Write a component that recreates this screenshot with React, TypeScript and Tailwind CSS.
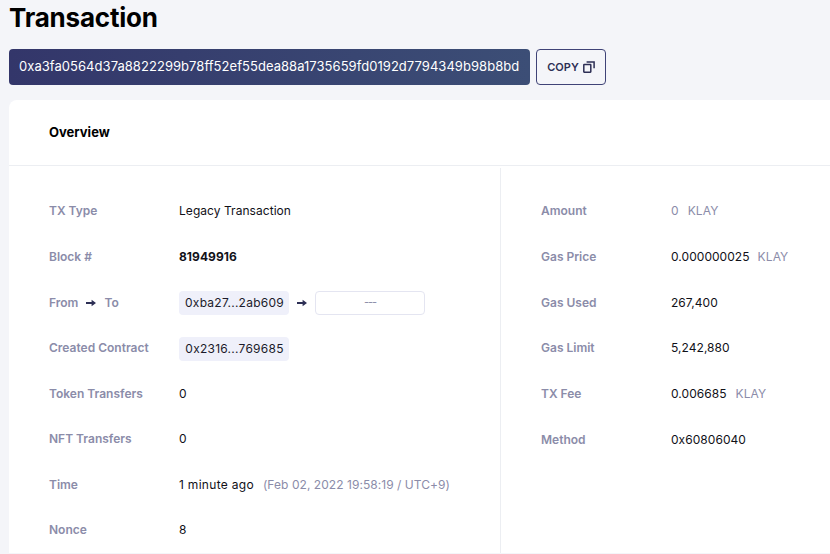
import React from 'react';

const Arrow = () => (
  <svg width="10" height="8" viewBox="0 0 10 8" className="shrink-0 text-[#2d2f55]" fill="currentColor">
    <path d="M0 3.1h5.6V0.8L10 4 5.6 7.2V4.9H0z" />
  </svg>
);

const CopyIcon = () => (
  <svg width="12" height="12" viewBox="0 0 12 12" fill="none" stroke="#2d2f55" strokeWidth="1.5" className="shrink-0">
    <rect x="0.8" y="3.6" width="7" height="7.6" rx="0.4" />
    <path d="M3.6 0.9h7.5v6.4" />
  </svg>
);

const Chip = ({ children }: { children: React.ReactNode }) => (
  <span className="flex h-6 w-[110px] items-center justify-center rounded-sm bg-[#eff0fa] pl-px text-xs tracking-[0.25px] text-[#1b1b2b]">
    {children}
  </span>
);

const Row = ({ label, right, children }: { label: React.ReactNode; right?: boolean; children: React.ReactNode }) => (
  <div className={right ? 'flex h-[45.7px] items-center' : 'flex h-[45.58px] items-center'}>
    <div className="flex w-[130px] shrink-0 items-center gap-2 text-xs font-semibold text-[#8b8ca9]">{label}</div>
    <div className="flex items-center text-xs tracking-[0.05px] text-[#111118]">{children}</div>
  </div>
);

const Unit = ({ children }: { children: React.ReactNode }) => (
  <span className="ml-[9px] tracking-[0.1px] text-[#8b8ca9]">{children}</span>
);

export default function App() {
  return (
    <div className="h-[554px] overflow-hidden bg-[#f4f5f9] pl-[9px] font-['Inter',sans-serif]">
      <h1 className="h-[49px] pt-[1px] text-[26px] leading-[34px] font-bold tracking-[-0.2px] text-black">Transaction</h1>
      <div className="flex gap-[6px]">
        <div className="flex h-9 w-[521px] items-center rounded-sm bg-gradient-to-r from-[#33366a] to-[#3c4e76] pl-[10px] text-[13px] tracking-[0.045px] text-white">
          0xa3fa0564d37a8822299b78ff52ef55dea88a1735659fd0192d7794349b98b8bd
        </div>
        <button className="flex h-9 w-[70px] items-center justify-center gap-1 rounded-sm border border-[#3f4377] text-[11px] font-semibold text-[#2d2f55]">
          COPY <CopyIcon />
        </button>
      </div>
      <div className="mt-[15px] rounded-tl-lg bg-white">
        <div className="flex h-[66px] items-center border-b border-[#eceef2] pl-10 text-[13px] font-bold text-black">
          Overview
        </div>
        <div className="flex">
          <div className="mt-[2px] w-[492px] border-r border-[#eceef2] pt-[20.61px] pl-10">
            <Row label="TX Type">Legacy Transaction</Row>
            <Row label="Block #"><span className="font-bold">81949916</span></Row>
            <Row label={<>From <Arrow /> To</>}>
              <Chip>0xba27...2ab609</Chip>
              <span className="mx-[8px]"><Arrow /></span>
              <span className="flex h-6 w-[110px] items-center justify-center rounded-sm border border-[#e4e5f1] text-[11px] tracking-[-1px] text-[#8b8ca9]">---</span>
            </Row>
            <Row label="Created Contract"><span className="mt-px"><Chip>0x2316...769685</Chip></span></Row>
            <Row label="Token Transfers">0</Row>
            <Row label="NFT Transfers">0</Row>
            <Row label="Time">
              <span className="tracking-[0.3px]">1 minute ago</span>
              <span className="ml-[9px] tracking-[0.05px] text-[#8b8ca9]">(Feb 02, 2022 19:58:19 / UTC+9)</span>
            </Row>
            <Row label="Nonce">8</Row>
          </div>
          <div className="mt-[2px] pt-[20.55px] pl-10">
            <Row right label="Amount"><span className="text-[#8b8ca9]">0</span><Unit>KLAY</Unit></Row>
            <Row right label="Gas Price"><span className="-mr-px">0.000000025</span><Unit>KLAY</Unit></Row>
            <Row right label="Gas Used">267,400</Row>
            <Row right label="Gas Limit">5,242,880</Row>
            <Row right label="TX Fee">0.006685<Unit>KLAY</Unit></Row>
            <Row right label="Method">0x60806040</Row>
          </div>
        </div>
      </div>
    </div>
  );
}
